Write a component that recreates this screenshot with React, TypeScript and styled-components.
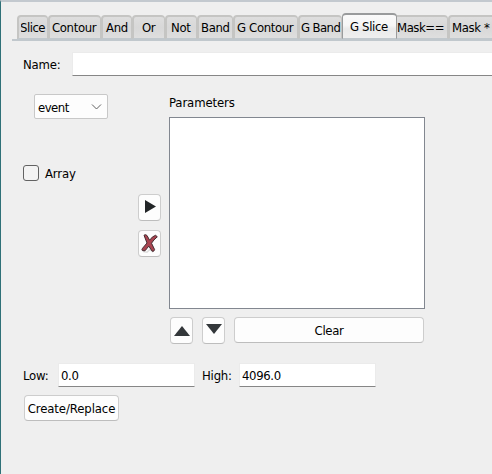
import React from 'react';
import styled, { createGlobalStyle, css } from 'styled-components';

const GlobalStyle = createGlobalStyle`
  *, *::before, *::after { box-sizing: border-box; }
  body { margin: 0; overflow: hidden; }
  input, button { font: inherit; color: inherit; letter-spacing: inherit; }
`;

const Window = styled.main`
  position: relative;
  width: 492px;
  height: 474px;
  overflow: hidden;
  background: #efefef;
  border-left: 1px solid #2f7178;
  border-top: 2px solid #c3c9cf;
  font: 13px/16px 'DejaVu Sans Condensed', 'DejaVu Sans', sans-serif;
  font-stretch: condensed;
  letter-spacing: -0.35px;
  color: #000;
`;

const Speck = styled.i<{ $top: number; $height: number; $color: string }>`
  position: absolute;
  left: -1px;
  top: ${(p) => p.$top - 2}px;
  width: 1px;
  height: ${(p) => p.$height}px;
  background: ${(p) => p.$color};
`;

const TabBar = styled.div`
  display: flex;
  align-items: flex-end;
  height: 39px;
  margin-left: 11px;
  padding: 11px 0 0 5px;
  border-bottom: 2px solid #c1c8cd;
`;

const Tab = styled.button<{ $width: number; $pad: number; $active?: boolean; $flush?: boolean }>`
  flex: none;
  width: ${(p) => p.$width}px;
  height: 24px;
  padding: 1px 0 0 ${(p) => p.$pad}px;
  border: solid #c5c5c3;
  border-width: 2px 1px 1px 2px;
  border-bottom-color: #c1c8cd;
  border-radius: 4px 4px 0 0;
  background: linear-gradient(#dedede, #d8d8d8 50%, #dedede);
  text-align: left;
  white-space: nowrap;
  overflow: hidden;
  ${(p) =>
    p.$active &&
    css`
      height: 26px;
      border-color: #999b9c;
      border-bottom-color: #c1c8cd;
      border-left-width: 1px;
      background: linear-gradient(#fafafa, #f6f6f6 45%, #eaeaea 60%, #efefef);
    `}
  ${(p) =>
    p.$flush &&
    css`
      border-left-width: 0;
      border-top-left-radius: 0;
    `}
`;

const Label = styled.span<{ $spacing?: number; $drop?: number }>`
  display: inline-block;
  white-space: pre;
  padding-top: ${(p) => p.$drop ?? 0}px;
  ${(p) => p.$spacing !== undefined && `letter-spacing: ${p.$spacing}px;`}
`;

const ClippedLabel = styled(Label)`
  width: 25px;
  overflow: hidden;
  text-indent: -1px;
  vertical-align: top;
`;

const NameRow = styled.div`
  display: flex;
  align-items: center;
  height: 24px;
  margin: 11px 0 0 22px;
`;

const FieldLabel = styled.div<{ $width: number; $indent?: number }>`
  flex: none;
  width: ${(p) => p.$width}px;
  padding: 1px 0 0 ${(p) => p.$indent ?? 0}px;
  letter-spacing: -0.2px;
`;

const LineInput = styled.input<{ $width: number }>`
  flex: none;
  width: ${(p) => p.$width}px;
  height: 24px;
  padding: 1px 0 0 2px;
  border: 1px solid #ebebeb;
  border-bottom-color: #868686;
  background: #fff;
  outline: none;
`;

const Body = styled.div`
  display: grid;
  grid-template-columns: 115px 31px 256px;
  height: 268px;
  margin: 18px 0 0 22px;
`;

const Options = styled.div`
  display: flex;
  flex-direction: column;
  align-items: flex-start;
`;

const Combo = styled.button`
  display: flex;
  align-items: center;
  justify-content: space-between;
  width: 74px;
  height: 25px;
  margin-left: 11px;
  padding: 1px 5px 0 3px;
  border: 1px solid #c8c8c8;
  border-radius: 2px;
  background: #fdfdfd;
`;

const CheckRow = styled.label`
  display: flex;
  align-items: center;
  gap: 6px;
  height: 16px;
  margin-top: 46px;
`;

const CheckBox = styled.span`
  width: 16px;
  height: 16px;
  border: 1px solid #626262;
  border-radius: 3px;
  background: #f3f3f3;
`;

const TransferButtons = styled.div`
  display: flex;
  flex-direction: column;
  gap: 9px;
  padding-top: 100px;
`;

const PushButton = styled.button<{ $width: number; $height: number }>`
  display: flex;
  flex: none;
  align-items: center;
  justify-content: center;
  width: ${(p) => p.$width}px;
  height: ${(p) => p.$height}px;
  padding: 0;
  border: 1px solid #cdcdcd;
  border-bottom-color: #bdbdbd;
  border-radius: 4px;
  background: #fdfdfd;
`;

const ListPanel = styled.section`
  display: flex;
  flex-direction: column;
`;

const ListBox = styled.div`
  height: 192px;
  margin-top: 6px;
  border: 1px solid #828790;
  background: #fff;
`;

const ListActions = styled.div`
  display: flex;
  margin-top: 8px;
  padding-left: 1px;
  gap: 9px;
`;

const ListTitle = styled.div`
  height: 17px;
  padding-top: 1px;
  letter-spacing: -0.12px;
`;

const RangeRow = styled.div`
  display: flex;
  align-items: center;
  height: 24px;
  margin: 1px 0 0 22px;
`;

const Footer = styled.div`
  margin: 8px 0 0 23px;
`;

const tabs = [
  { text: 'Contour', width: 53, pad: 2 },
  { text: 'And', width: 31, pad: 3 },
  { text: 'Or', width: 33, pad: 8 },
  { text: 'Not', width: 32, pad: 4 },
  { text: 'Band', width: 36, pad: 2 },
  { text: 'G Contour', width: 65, pad: 2 },
  { text: 'G Band', width: 44, pad: 1, spacing: -0.6 },
  { text: 'G Slice', width: 55, pad: 7, active: true },
  { text: 'Mask==', width: 51, pad: 0, spacing: -0.45, flush: true },
  { text: 'Mask *', width: 60, pad: 2 },
];

const specks = [
  { top: 103, height: 1, color: '#8ba5a8' },
  { top: 106, height: 8, color: '#6889bd' },
  { top: 124, height: 3, color: '#85a7a8' },
  { top: 132, height: 2, color: '#b59b59' },
  { top: 268, height: 2, color: '#44495a' },
  { top: 271, height: 1, color: '#a0784b' },
  { top: 274, height: 1, color: '#344357' },
  { top: 349, height: 2, color: '#5b5260' },
  { top: 353, height: 2, color: '#b78449' },
  { top: 356, height: 2, color: '#343f5b' },
  { top: 430, height: 8, color: '#285d83' },
];

export default function App() {
  return (
    <Window>
      <GlobalStyle />
      {specks.map((s) => (
        <Speck key={s.top} $top={s.top} $height={s.height} $color={s.color} />
      ))}
      <TabBar role="tablist">
        <Tab role="tab" $width={31} $pad={2}>
          <ClippedLabel $spacing={-0.5}>Slice</ClippedLabel>
        </Tab>
        {tabs.map((t) => (
          <Tab
            key={t.text}
            role="tab"
            aria-selected={!!t.active}
            $width={t.width}
            $pad={t.pad}
            $active={t.active}
            $flush={t.flush}
          >
            <Label $spacing={t.spacing}>{t.text}</Label>
          </Tab>
        ))}
      </TabBar>
      <NameRow>
        <FieldLabel $width={49}>Name:</FieldLabel>
        <LineInput $width={424} aria-label="Name" />
      </NameRow>
      <Body>
        <Options>
          <Combo>
            <Label $spacing={-0.5} $drop={1}>
              event
            </Label>
            <svg width="11" height="7" viewBox="0 0 11 7" fill="none" stroke="#606060">
              <path d="M1 .5l4.5 4.5L10 .5" />
            </svg>
          </Combo>
          <CheckRow>
            <CheckBox />
            <Label $spacing={-0.15} $drop={2}>
              Array
            </Label>
          </CheckRow>
        </Options>
        <TransferButtons>
          <PushButton $width={23} $height={27} aria-label="Add">
            <svg width="13" height="15" viewBox="0 0 13 15">
              <path d="M2 0l11 6.5L2 13z" fill="#222527" />
            </svg>
          </PushButton>
          <PushButton $width={23} $height={27} aria-label="Remove">
            <svg width="17" height="19" viewBox="0 0 17 19">
              <path d="M2 17.6l4 .6 3-3 3 3" fill="none" stroke="#ddd" strokeWidth="1.5" />
              <path
                d="M3 1.2Q4.5 0 6 1.5L8.6 6.2Q11.5 2 14.6 1.3L16.3 2.8Q12.6 5.8 10.5 9.2L13.6 15.6Q13 18 11.2 17.2L7.8 12.2Q5.8 14.6 4 16.8L1.4 16.6Q.4 15.4 1.6 14.2L6 9z"
                fill="#a94450"
                stroke="#432c31"
                strokeWidth="1"
                strokeLinejoin="round"
              />
            </svg>
          </PushButton>
        </TransferButtons>
        <ListPanel>
          <ListTitle>Parameters</ListTitle>
          <ListBox />
          <ListActions>
            <PushButton $width={23} $height={27} aria-label="Move up">
              <svg width="16" height="10" viewBox="0 0 16 10">
                <path d="M0 10L8 0l8 10z" fill="#33373a" />
              </svg>
            </PushButton>
            <PushButton $width={23} $height={27} aria-label="Move down">
              <svg width="16" height="14" viewBox="0 0 16 14">
                <path d="M0 0h16L8 10z" fill="#33373a" />
              </svg>
            </PushButton>
            <PushButton $width={190} $height={26}>
              <Label $drop={2}>Clear</Label>
            </PushButton>
          </ListActions>
        </ListPanel>
      </Body>
      <RangeRow>
        <FieldLabel $width={35}>Low:</FieldLabel>
        <LineInput $width={137} defaultValue="0.0" aria-label="Low" />
        <FieldLabel $width={44} $indent={7}>
          High:
        </FieldLabel>
        <LineInput $width={137} defaultValue="4096.0" aria-label="High" />
      </RangeRow>
      <Footer>
        <PushButton $width={95} $height={26}>
          <Label $spacing={-0.1} $drop={2}>
            Create/Replace
          </Label>
        </PushButton>
      </Footer>
    </Window>
  );
}
